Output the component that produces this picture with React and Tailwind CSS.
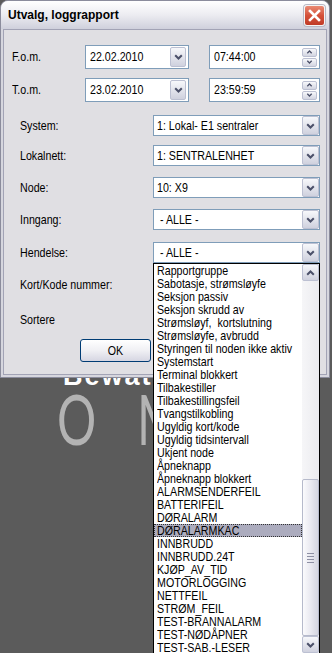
import React from 'react';

// events shown in the open "Hendelse" dropdown
const events = [
  'Rapportgruppe',
  'Sabotasje, strømsløyfe',
  'Seksjon passiv',
  'Seksjon skrudd av',
  'Strømsløyf,  kortslutning',
  'Strømsløyfe, avbrudd',
  'Styringen til noden ikke aktiv',
  'Systemstart',
  'Terminal blokkert',
  'Tilbakestiller',
  'Tilbakestillingsfeil',
  'Tvangstilkobling',
  'Ugyldig kort/kode',
  'Ugyldig tidsintervall',
  'Ukjent node',
  'Åpneknapp',
  'Åpneknapp blokkert',
  'ALARMSENDERFEIL',
  'BATTERIFEIL',
  'DØRALARM',
  'DØRALARMKAC',
  'INNBRUDD',
  'INNBRUDD.24T',
  'KJØP_AV_TID',
  'MOTORLOGGING',
  'NETTFEIL',
  'STRØM_FEIL',
  'TEST-BRANNALARM',
  'TEST-NØDÅPNER',
  'TEST-SAB.-LESER',
];

const selected = 'DØRALARMKAC';

// the old dialog font is a narrow sans, squeeze Liberation Sans to match
const Narrow = ({ children, className = 'origin-left' }) => (
  <span className={`${className} inline-block scale-x-[0.82] whitespace-pre`}>{children}</span>
);

const Chevron = ({ up = false, small = false }) => (
  <svg width={small ? 7 : 9} height={small ? 4 : 6} viewBox="0 0 9 6" className={up ? 'rotate-180' : ''}>
    <path d="M1.2 1.2 L4.5 4.5 L7.8 1.2" fill="none" stroke="#4b5069" strokeWidth="2" />
  </svg>
);

const DropButton = ({ className = 'w-[17px] h-[19px]', up = false }) => (
  <div className={`${className} shrink-0 rounded-[2px] border border-[#bcc0d2] bg-linear-to-b from-[#f7f8fb] to-[#cfd1de] flex items-center justify-center`}>
    <Chevron up={up} />
  </div>
);

const Combo = ({ value }) => (
  <div className="w-[167px] h-[21px] border border-[#7f9db9] bg-white flex items-center justify-between pl-[3px]">
    <Narrow>{value}</Narrow>
    <DropButton />
  </div>
);

const DateInput = ({ value }) => (
  <div className="w-[104px] h-[24px] border border-[#7f9db9] bg-white flex items-center justify-between pl-[4px] pr-[2px]">
    <Narrow>{value}</Narrow>
    <DropButton className="w-[16px] h-[20px]" />
  </div>
);

const TimeInput = ({ value }) => (
  <div className="w-[111px] h-[24px] border border-[#7f9db9] bg-white flex items-center justify-between pl-[4px] pr-[2px]">
    <Narrow>{value}</Narrow>
    <div className="flex flex-col gap-[1px]">
      <div className="w-[15px] h-[9px] rounded-[2px] border border-[#bcc0d2] bg-linear-to-b from-[#f7f8fb] to-[#d3d5e1] flex items-center justify-center">
        <Chevron up small />
      </div>
      <div className="w-[15px] h-[9px] rounded-[2px] border border-[#bcc0d2] bg-linear-to-b from-[#f7f8fb] to-[#d3d5e1] flex items-center justify-center">
        <Chevron small />
      </div>
    </div>
  </div>
);

const ComboRow = ({ label, value, className }) => (
  <div className={`${className} h-[21px] flex items-center pl-[16px]`}>
    <span className="w-[133px]"><Narrow>{label}</Narrow></span>
    {value !== undefined && <Combo value={value} />}
  </div>
);

const CloseButton = () => (
  <div className="w-[21px] h-[21px] rounded-[3px] border border-[#f4f4f4] bg-linear-to-b from-[#e98a74] via-[#d4513a] to-[#c03a26] flex items-center justify-center shadow-[0_0_0_1px_#b8b8c4]">
    <svg width="13" height="13" viewBox="0 0 13 13">
      <path d="M2 2 L11 11 M11 2 L2 11" stroke="white" strokeWidth="2.6" strokeLinecap="square" />
    </svg>
  </div>
);

const Window = () => (
  <div className="w-[330px] h-[378px] flex flex-col rounded-t-[8px] border border-[#8b8c9c] bg-[#d6d6de]">
    <div className="h-[28px] shrink-0 flex items-center justify-between pl-[7px] pr-[4px] rounded-t-[7px] bg-linear-to-b from-[#ffffff] via-[#ececf1] to-[#cfd0dc]">
      <span className="font-['Liberation_Sans',Arial,sans-serif] font-bold text-[12px]">Utvalg, loggrapport</span>
      <CloseButton />
    </div>
    <div className="flex-1 mx-[2px] mb-[2px] border border-[#a2a3b5] bg-[#e0dfe3] flex flex-col">
      <div className="mt-[15px] h-[24px] flex items-center pl-[8px]">
        <span className="w-[73px]"><Narrow>F.o.m.</Narrow></span>
        <DateInput value="22.02.2010" />
        <div className="w-[20px]" />
        <TimeInput value="07:44:00" />
      </div>
      <div className="mt-[9px] h-[24px] flex items-center pl-[8px]">
        <span className="w-[73px]"><Narrow>T.o.m.</Narrow></span>
        <DateInput value="23.02.2010" />
        <div className="w-[20px]" />
        <TimeInput value="23:59:59" />
      </div>
      <ComboRow className="mt-[13px]" label="System:" value="1: Lokal- E1 sentraler" />
      <ComboRow className="mt-[9px]" label="Lokalnett:" value="1: SENTRALENHET" />
      <ComboRow className="mt-[11px]" label="Node:" value="10: X9" />
      <ComboRow className="mt-[11px]" label="Inngang:" value=" - ALLE -" />
      <ComboRow className="mt-[12px]" label="Hendelse:" value=" - ALLE -" />
      <ComboRow className="mt-[11px]" label="Kort/Kode nummer:" />
      <ComboRow className="mt-[14px]" label="Sortere" />
      <div className="mt-[9px] pl-[76px]">
        <div className="w-[71px] h-[23px] rounded-[3px] border border-[#003c74] bg-linear-to-b from-[#ffffff] via-[#f0f0f4] to-[#d6d6e2] flex items-center justify-center">
          <Narrow className="origin-center">OK</Narrow>
        </div>
      </div>
    </div>
  </div>
);

const Logo = () => (
  <div className="h-[80px] overflow-hidden">
    <div className="-mt-[15px] pl-[63px] font-['Liberation_Sans',Arial,sans-serif] font-bold text-[27px] leading-none tracking-[2px] text-white">
      Bewator
    </div>
    <div className="-mt-[7px] pl-[57px] flex font-['Lato',sans-serif] font-normal text-[70px] leading-none text-[#b3b3b3]">
      <span className="w-[80px] inline-block origin-left scale-x-[0.7]">O</span>
      <span className="inline-block origin-left scale-x-[0.7]">M</span>
    </div>
  </div>
);

const EventList = () => (
  <div className="absolute left-[153px] top-[263px] w-[167px] h-[391px] border border-black bg-white flex">
    <div className="w-[148px] flex flex-col overflow-hidden">
      {events.map((e) => (
        <div
          key={e}
          className={e === selected
            ? 'h-[13px] shrink-0 leading-[11px] pl-[2px] bg-[#acacbe] border border-dotted border-[#333]'
            : 'h-[13px] shrink-0 leading-[13px] pl-[3px]'}
        >
          <Narrow>{e}</Narrow>
        </div>
      ))}
    </div>
    <div className="w-[17px] flex flex-col bg-linear-to-r from-[#f6f6f8] to-[#ebebef]">
      <DropButton className="w-[17px] h-[17px]" up />
      <div className="flex-1 flex flex-col justify-end">
        <div className="h-[157px] rounded-[2px] border border-[#b6bacb] bg-linear-to-r from-[#fbfbfd] via-[#e9e9f0] to-[#d4d5e0] flex flex-col items-center justify-center gap-[2px]">
          <div className="w-[7px] h-[1px] bg-[#8d8fa3]" />
          <div className="w-[7px] h-[1px] bg-[#8d8fa3]" />
          <div className="w-[7px] h-[1px] bg-[#8d8fa3]" />
          <div className="w-[7px] h-[1px] bg-[#8d8fa3]" />
        </div>
      </div>
      <DropButton className="w-[17px] h-[17px]" />
    </div>
  </div>
);

export default function App() {
  return (
    <div className="w-[332px] h-[653px] bg-[#5b5b5b] overflow-hidden relative font-['Liberation_Sans',Arial,sans-serif] text-[13px] text-black">
      <Window />
      <Logo />
      <EventList />
    </div>
  );
}
